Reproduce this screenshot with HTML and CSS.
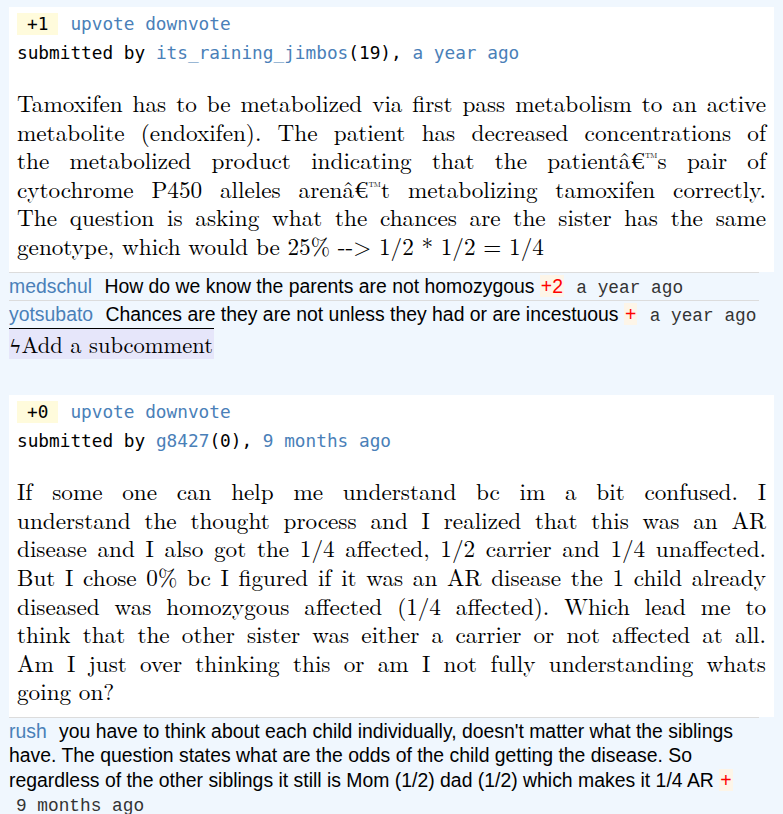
FILE: index.html
```html
<!DOCTYPE html>
<html>
<head>
<meta charset="utf-8">
<link rel="stylesheet" href="styles.css">
</head>
<body>
<div class="page">
  <article class="post">
    <div class="card">
      <div class="votes"><span class="score">+1</span><span class="vote-links"><a class="link">upvote</a> <a class="link">downvote</a></span></div>
      <div class="byline">submitted by <a class="link">its_raining_jimbos</a>(19), <a class="link">a year ago</a></div>
      <p class="body">
        <span class="ln">Tamoxifen has to be metabolized via first pass metabolism to an active</span>
        <span class="ln">metabolite (endoxifen). The patient has decreased concentrations of</span>
        <span class="ln">the metabolized product indicating that the patientâ€<span class="tm">™</span>s pair of</span>
        <span class="ln">cytochrome P450 alleles arenâ€<span class="tm">™</span>t metabolizing tamoxifen correctly.</span>
        <span class="ln">The question is asking what the chances are the sister has the same</span>
        <span class="ln last">genotype, which would be 25% --&gt; 1/2 * 1/2 = 1/4</span>
      </p>
    </div>
    <ul class="comments">
      <li class="comment"><a class="user">medschul</a> How do we know the parents are not homozygous <span class="pts">+2</span> <span class="time">a year ago</span></li>
      <li class="comment"><a class="user">yotsubato</a> Chances are they are not unless they had or are incestuous <span class="pts">+</span> <span class="time">a year ago</span></li>
    </ul>
    <div class="add"><span class="bolt">ϟ</span>Add a subcomment</div>
  </article>

  <article class="post">
    <div class="card">
      <div class="votes"><span class="score">+0</span><span class="vote-links"><a class="link">upvote</a> <a class="link">downvote</a></span></div>
      <div class="byline">submitted by <a class="link">g8427</a>(0), <a class="link">9 months ago</a></div>
      <p class="body">
        <span class="ln">If some one can help me understand bc im a bit confused. I</span>
        <span class="ln">understand the thought process and I realized that this was an AR</span>
        <span class="ln">disease and I also got the 1/4 affected, 1/2 carrier and 1/4 unaffected.</span>
        <span class="ln">But I chose 0% bc I figured if it was an AR disease the 1 child already</span>
        <span class="ln">diseased was homozygous affected (1/4 affected). Which lead me to</span>
        <span class="ln">think that the other sister was either a carrier or not affected at all.</span>
        <span class="ln">Am I just over thinking this or am I not fully understanding whats</span>
        <span class="ln last">going on?</span>
      </p>
    </div>
    <ul class="comments">
      <li class="comment"><a class="user">rush</a> you have to think about each child individually, doesn't matter what the siblings have. The question states what are the odds of the child getting the disease. So regardless of the other siblings it still is Mom (1/2) dad (1/2) which makes it 1/4 AR <span class="pts">+</span> <span class="time">9 months ago</span></li>
    </ul>
  </article>
</div>
</body>
</html>
```

FILE: styles.css
```css
html, body {
  margin: 0;
  padding: 0;
  background: #f0f7fe;
}

.page {
  padding: 7px 9px 0 9px;
}

.post {
  margin-bottom: 36px;
}

.card {
  background: #ffffff;
  padding: 6px 8px 11px 8px;
}

.votes {
  display: flex;
  align-items: center;
  gap: 12px;
  font-family: "DejaVu Sans Mono", monospace;
  font-size: 17.75px;
  line-height: 22px;
  color: #000;
}

.score {
  background: #fffbdc;
  padding: 0 10px;
}

.link {
  color: #4a80b8;
  text-decoration: none;
}

.byline {
  margin-top: 7px;
  font-family: "DejaVu Sans Mono", monospace;
  font-size: 17.75px;
  line-height: 22px;
  color: #000;
}

.body {
  margin: 25px 0 0 0;
  font-family: "Latin Modern Roman", "Liberation Serif", serif;
  font-size: 23.2px;
  line-height: 28.6px;
  color: #000;
}

.ln {
  display: block;
  white-space: nowrap;
  text-align: justify;
  text-align-last: justify;
}

.ln.last {
  text-align-last: left;
}

.tm {
  font-size: 0.55em;
  vertical-align: 0.55em;
  line-height: 0;
}

.comments {
  list-style: none;
  margin: 0 15px 0 0;
  padding: 0;
}

.comment {
  border-top: 1px solid #dcdcdc;
  padding: 1px 0 2px 0;
  font-family: "Liberation Sans", Arial, sans-serif;
  font-size: 19.4px;
  line-height: 24.3px;
  color: #000;
}

.user {
  color: #4a80b8;
  margin-right: 7px;
}

.pts {
  color: #ff0000;
  background: #fdf5e8;
  padding: 0 1px;
  line-height: 1;
}

.time {
  font-family: "Liberation Mono", "Courier New", monospace;
  font-size: 17.8px;
  color: #333;
  margin-left: 7px;
  white-space: nowrap;
  line-height: 1;
}

.add {
  display: inline-block;
  margin-top: 0;
  border-top: 1px solid #000;
  background: #e6e6fa;
  font-family: "Latin Modern Roman", "Liberation Serif", serif;
  font-size: 22.5px;
  line-height: 30px;
  padding-right: 1px;
}

.bolt {
  font-family: "DejaVu Serif", serif;
  font-size: 19px;
  line-height: 1;
}
```
